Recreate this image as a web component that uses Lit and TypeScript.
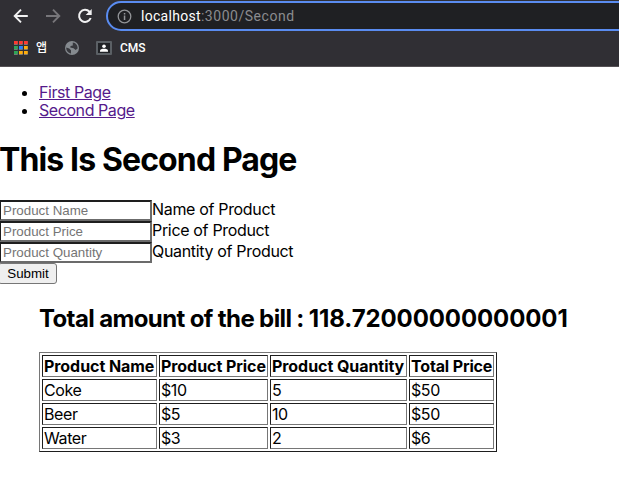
import { LitElement, html, css } from "lit";
import { customElement } from "lit/decorators.js";

@customElement("browser-chrome")
class BrowserChrome extends LitElement {
  static styles = css`
    :host { display: block; height: 67px; box-sizing: border-box; background: #302f34; border-bottom: 1px solid #555155; overflow: hidden; font-family: Roboto, "Noto Sans CJK KR", sans-serif; color: #fff; }
    svg { display: block; flex: none; }
    .nav { display: flex; align-items: center; height: 32px; padding-left: 12px; }
    .nav .btn { margin-right: 14px; }
    .nav .reload { margin-right: 12px; }
    .url { flex: 1; display: flex; align-items: center; box-sizing: border-box; height: 30px; margin: 0 -20px 0 0; border: 2px solid #5a8cf0; border-radius: 15px; background: #1f2023; padding-left: 9px; font-size: 14px; color: #8b8c8f; }
    .addr { margin-left: 9px; letter-spacing: 0.53px; white-space: nowrap; }
    .addr b { font-weight: 400; color: #fff; letter-spacing: 0.3px; }
    .marks { display: flex; align-items: center; height: 32px; padding-left: 14px; font-size: 12px; font-weight: 500; }
    .ko { margin: 0 17px 0 8px; font-size: 12px; line-height: 16px; width: 12px; }
    .card { margin: 0 8px 0 17px; }
  `;
  render() {
    const dots = ["#ff3a30", "#ff3a30", "#ff3a30", "#2fa556", "#2a85ff", "#ffad0b", "#2fa556", "#ffad0b", "#ffad0b"];
    return html`
      <div class="nav">
        <svg class="btn" width="18" height="18" viewBox="0 0 18 18" fill="none" stroke="#f1f1f2" stroke-width="1.9"><path d="M15.8 9H3M9 2.7L2.7 9L9 15.3"/></svg>
        <svg class="btn" width="18" height="18" viewBox="0 0 18 18" fill="none" stroke="#77767a" stroke-width="1.9"><path d="M2 9H14.8M9 2.7L15.3 9L9 15.3"/></svg>
        <svg class="reload" width="18" height="18" viewBox="0 0 18 18"><path d="M14.7 11A6 6 0 1 1 13.5 4.8L14.5 5.9" fill="none" stroke="#f1f1f2" stroke-width="2"/><path d="M15.7 2V8H9.7Z" fill="#f1f1f2"/></svg>
        <div class="url">
          <svg width="15" height="15" viewBox="0 0 15 15"><circle cx="7.5" cy="7.5" r="6.3" fill="none" stroke="#929497" stroke-width="1.3"/><path d="M6.8 3.9h1.5v1.5H6.8zM6.8 6.6h1.5v4.3H6.8z" fill="#929497"/></svg>
          <span class="addr"><b>localhost</b>:3000/Second</span>
        </div>
      </div>
      <div class="marks">
        <svg width="14" height="14" viewBox="0 0 14 14">${dots.map((c, i) => this.dot(c, i))}</svg>
        <span class="ko">앱</span>
        <svg width="14" height="14" viewBox="0 0 14 14"><circle cx="7" cy="7" r="7" fill="#858a8f"/><path d="M1.3 6.6L4.2 7.4L6 9.2V12.6C3.3 12.2 1 9.8 1.3 6.6ZM7.8 1.5C10.8 1.8 12.8 4.3 12.6 7.4L10.6 8.9L8.6 7.2L5.2 6.6L5.6 5L7.8 4.4Z" fill="#37383d"/></svg>
        <svg class="card" width="16" height="14" viewBox="0 0 16 14"><rect width="16" height="14" rx="1" fill="#5b6065"/><rect x="2" y="2" width="12" height="10" fill="#202226"/><circle cx="8" cy="5.2" r="1.8" fill="#fff"/><path d="M4 10.7V9.8C4 8.4 6 7.8 8 7.8S12 8.4 12 9.8V10.7Z" fill="#fff"/></svg>
        <span>CMS</span>
      </div>`;
  }
  private dot(color: string, i: number) {
    return html`<svg x=${(i % 3) * 5} y=${Math.floor(i / 3) * 5} width="4" height="4" viewBox="0 0 4 4"><rect width="3.7" height="4" fill="#77777b"></rect><rect width="3.7" height="3.1" fill=${color}></rect></svg>`;
  }
}

@customElement("app-root")
class AppRoot extends LitElement {
  static styles = css`
    :host { display: block; width: 619px; height: 480px; overflow: hidden; background: #fff; color: #000; font: 16px/18px Inter, sans-serif; }
    ul { margin: 16px 0 0; padding: 0 0 0 39px; }
    li { height: 18px; }
    a { display: inline-block; color: #551a8b; text-decoration: underline; letter-spacing: -0.43px; }
    h1 { margin: 22px 0 0 -1px; font-size: 32px; line-height: 38px; letter-spacing: -0.88px; }
    form { margin: 21px 0 0; }
    label { display: flex; height: 21px; align-items: flex-start; white-space: nowrap; letter-spacing: -0.33px; }
    input { box-sizing: border-box; width: 153px; height: 21px; margin: 0 0 0 -1px; padding: 1px 2px; border: 2px solid; border-color: #1e1e1e #6b6b6b #6b6b6b #1e1e1e; border-radius: 0; background: #fff; font: 13.33px "Liberation Sans", sans-serif; }
    input::placeholder { color: #757575; }
    button { display: block; box-sizing: border-box; width: 59px; height: 21px; margin-left: -2px; padding: 0 0 0 1px; border: 1px solid #767676; border-radius: 3px; background: #efefef; color: #000; font: 13.33px "Liberation Sans", sans-serif; }
    .bill { padding-left: 39px; }
    h2 { margin: 20px 0 0; font-size: 24px; line-height: 29px; letter-spacing: -0.62px; white-space: nowrap; }
    .sum { letter-spacing: -0.1px; }
    table { margin-top: 19px; width: 458px; table-layout: fixed; border: 1px solid; border-color: #767676 #1e1e1e #1e1e1e #767676; border-spacing: 2px; line-height: 18px; }
    th, td { box-sizing: border-box; height: 22px; padding: 1px; border: 1px solid; border-color: #1e1e1e #767676 #767676 #1e1e1e; text-align: left; white-space: nowrap; letter-spacing: -0.4px; }
    th { letter-spacing: -0.06px; }
    th:last-child { letter-spacing: -0.15px; }
    .name { width: 115px; }
    .price { width: 109px; }
    .qty { width: 137px; }
  `;
  private fields = ["Name", "Price", "Quantity"];
  private rows = [["Coke", "$10", "5", "$50"], ["Beer", "$5", "10", "$50"], ["Water", "$3", "2", "$6"]];
  render() {
    return html`
      <browser-chrome></browser-chrome>
      <ul><li><a href="#">First Page</a></li><li><a href="#">Second Page</a></li></ul>
      <h1>This Is Second Page</h1>
      <form>
        ${this.fields.map((f) => html`<label><input placeholder="Product ${f}" /><span>${f} of Product</span></label>`)}
        <button type="button">Submit</button>
      </form>
      <div class="bill">
        <h2>Total amount of the bill : <span class="sum">118.72000000000001</span></h2>
        <table>
          <thead><tr><th class="name">Product Name</th><th class="price">Product Price</th><th class="qty">Product Quantity</th><th>Total Price</th></tr></thead>
          <tbody>${this.rows.map((r) => html`<tr>${r.map((c) => html`<td>${c}</td>`)}</tr>`)}</tbody>
        </table>
      </div>`;
  }
}
